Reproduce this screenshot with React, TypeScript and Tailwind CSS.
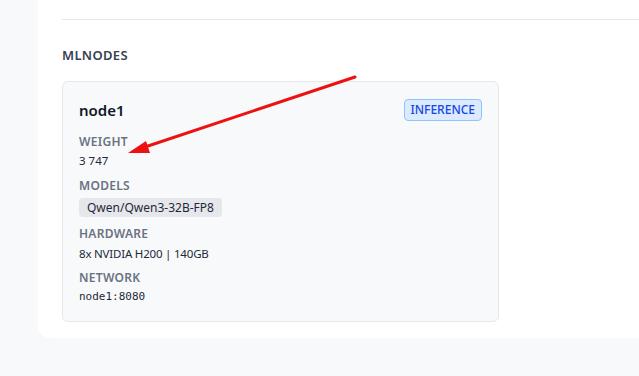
export default function App() {
  return (
    <div
      className="relative h-[376px] w-[639px] overflow-hidden bg-[#f8f9fb]"
      style={{ fontFamily: '"Noto Sans", "Open Sans", sans-serif' }}
    >
      <div className="ml-[38px] h-[338px] rounded-bl-xl bg-white pl-6">
        <div className="h-5 border-b border-gray-200" />

        <h2 className="mt-[25px] text-[13px] font-semibold leading-5 tracking-wide text-gray-700">
          MLNODES
        </h2>

        <div className="mt-[16px] w-[437px] rounded-md border border-gray-200 bg-[#f8f9fb] px-4 pb-4 pt-4">
          <div className="flex h-[23px] items-center justify-between">
            <span className="text-[15px] font-semibold leading-5 text-gray-900">node1</span>
            <span className="rounded border border-blue-300 bg-blue-100 px-[6px] py-[1px] text-[12px] font-medium leading-[18px] text-blue-700">
              INFERENCE
            </span>
          </div>

          <div className="mt-[13px] text-[12px] font-semibold leading-4 tracking-wide text-gray-500">WEIGHT</div>
          <div className="mt-[3px] text-[11.5px] leading-4 text-gray-800">3 747</div>

          <div className="mt-[9px] text-[12px] font-semibold leading-4 tracking-wide text-gray-500">MODELS</div>
          <div className="mt-1 flex">
            <span className="rounded bg-gray-200 px-2 text-[12px] leading-[19px] text-gray-800">
              Qwen/Qwen3-32B-FP8
            </span>
          </div>

          <div className="mt-[9px] text-[12px] font-semibold leading-4 tracking-wide text-gray-500">HARDWARE</div>
          <div className="mt-1 text-[11.5px] leading-4 tracking-[-0.2px] text-gray-800">8x NVIDIA H200 | 140GB</div>

          <div className="mt-2 text-[12px] font-semibold leading-4 tracking-wide text-gray-500">NETWORK</div>
          <div
            className="mt-[3px] text-[11px] leading-4 text-gray-800"
            style={{ fontFamily: '"DejaVu Sans Mono", "Liberation Mono", monospace' }}
          >
            node1:8080
          </div>
        </div>
      </div>

      {/* annotation arrow */}
      <svg className="pointer-events-none absolute left-0 top-0" width="639" height="376">
        <line x1="355" y1="77" x2="142" y2="148" stroke="#ee1111" strokeWidth="3" strokeLinecap="round" />
        <polygon points="128,153 146,141 150,153" fill="#ee1111" />
      </svg>
    </div>
  )
}
